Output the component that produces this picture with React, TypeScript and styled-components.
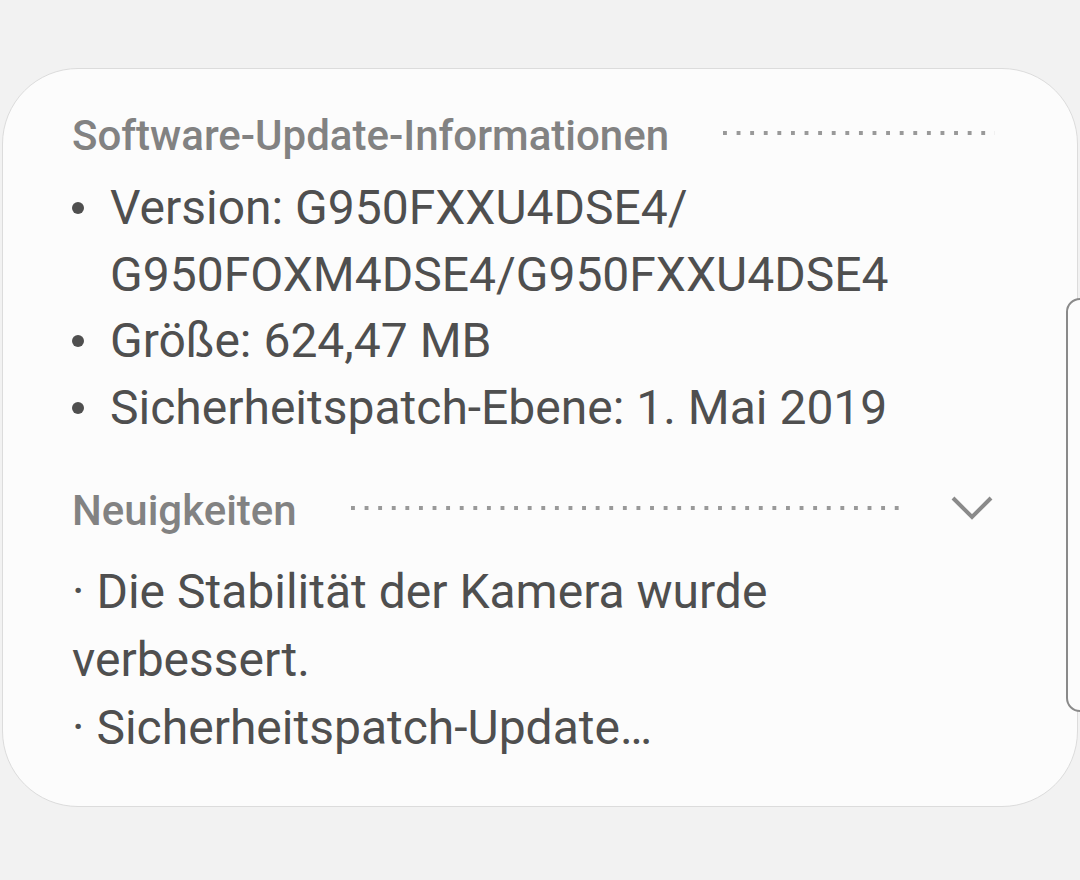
import React from "react";
import styled, { createGlobalStyle } from "styled-components";

const Global = createGlobalStyle`
  html, body { margin: 0; padding: 0; background: #f2f2f2; }
  body { font-family: Roboto, "Noto Sans", sans-serif; width: 1080px; height: 880px; overflow: hidden; }
`;

const Page = styled.div`
  position: relative;
  width: 1080px;
  height: 880px;
  padding: 68px 2px 0 2px;
  box-sizing: border-box;
`;

const Card = styled.div`
  box-sizing: border-box;
  width: 1076px;
  height: 739px;
  background: #fcfcfc;
  border: 1px solid #dcdcdc;
  border-radius: 76px;
  padding: 42px 82px 0 69px;
  display: flex;
  flex-direction: column;
`;

const HeaderRow = styled.div<{ $mt?: number }>`
  display: flex;
  align-items: center;
  margin-top: ${(p) => p.$mt ?? 0}px;
  height: 48px;
`;

const Title = styled.div`
  font-size: 42px;
  font-weight: 500;
  color: #828282;
  white-space: nowrap;
`;

const Dots = styled.div<{ $ml: number }>`
  flex: 1;
  height: 4px;
  margin-left: ${(p) => p.$ml}px;
  margin-top: -4px;
  background-image: linear-gradient(to right, #999 4px, transparent 4px);
  background-size: 13.6px 4px;
  background-repeat: repeat-x;
`;

const Chevron = styled.svg`
  flex: none;
  margin-left: 44px;
  margin-right: 2px;
  margin-top: -4px;
`;

const List = styled.ul`
  list-style: none;
  margin: 16px 0 0 0;
  padding: 0;
`;

const Item = styled.li`
  position: relative;
  padding-left: 38px;
  font-size: 48px;
  line-height: 66.5px;
  color: #4f4f4f;
  &::before {
    content: "";
    position: absolute;
    left: 0px;
    top: 27px;
    width: 12px;
    height: 12px;
    border-radius: 50%;
    background: #4f4f4f;
  }
`;

const Notes = styled.div`
  margin-top: 24px;
  font-size: 48px;
  line-height: 68px;
  color: #4f4f4f;
`;

const EdgeHandle = styled.div`
  position: absolute;
  left: 1066px;
  top: 298px;
  width: 30px;
  height: 414px;
  box-sizing: border-box;
  border: 2px solid #8a8a8a;
  border-radius: 14px;
  background: #fcfcfc;
`;

export default function App() {
  return (
    <>
      <Global />
      <Page>
        <Card>
          <HeaderRow>
            <Title>Software-Update-Informationen</Title>
            <Dots $ml={54} />
          </HeaderRow>
          <List>
            <Item>Version: G950FXXU4DSE4/ G950FOXM4DSE4/G950FXXU4DSE4</Item>
            <Item>Größe: 624,47 MB</Item>
            <Item>Sicherheitspatch-Ebene: 1. Mai 2019</Item>
          </List>
          <HeaderRow $mt={45}>
            <Title>Neuigkeiten</Title>
            <Dots $ml={54} />
            <Chevron width="42" height="26" viewBox="0 0 42 26">
              <polyline points="2,3 21,22 40,3" fill="none" stroke="#8a8a8a" strokeWidth="4" />
            </Chevron>
          </HeaderRow>
          <Notes>
            · Die Stabilität der Kamera wurde verbessert.
            <br />· Sicherheitspatch-Update…
          </Notes>
        </Card>
        <EdgeHandle />
      </Page>
    </>
  );
}
